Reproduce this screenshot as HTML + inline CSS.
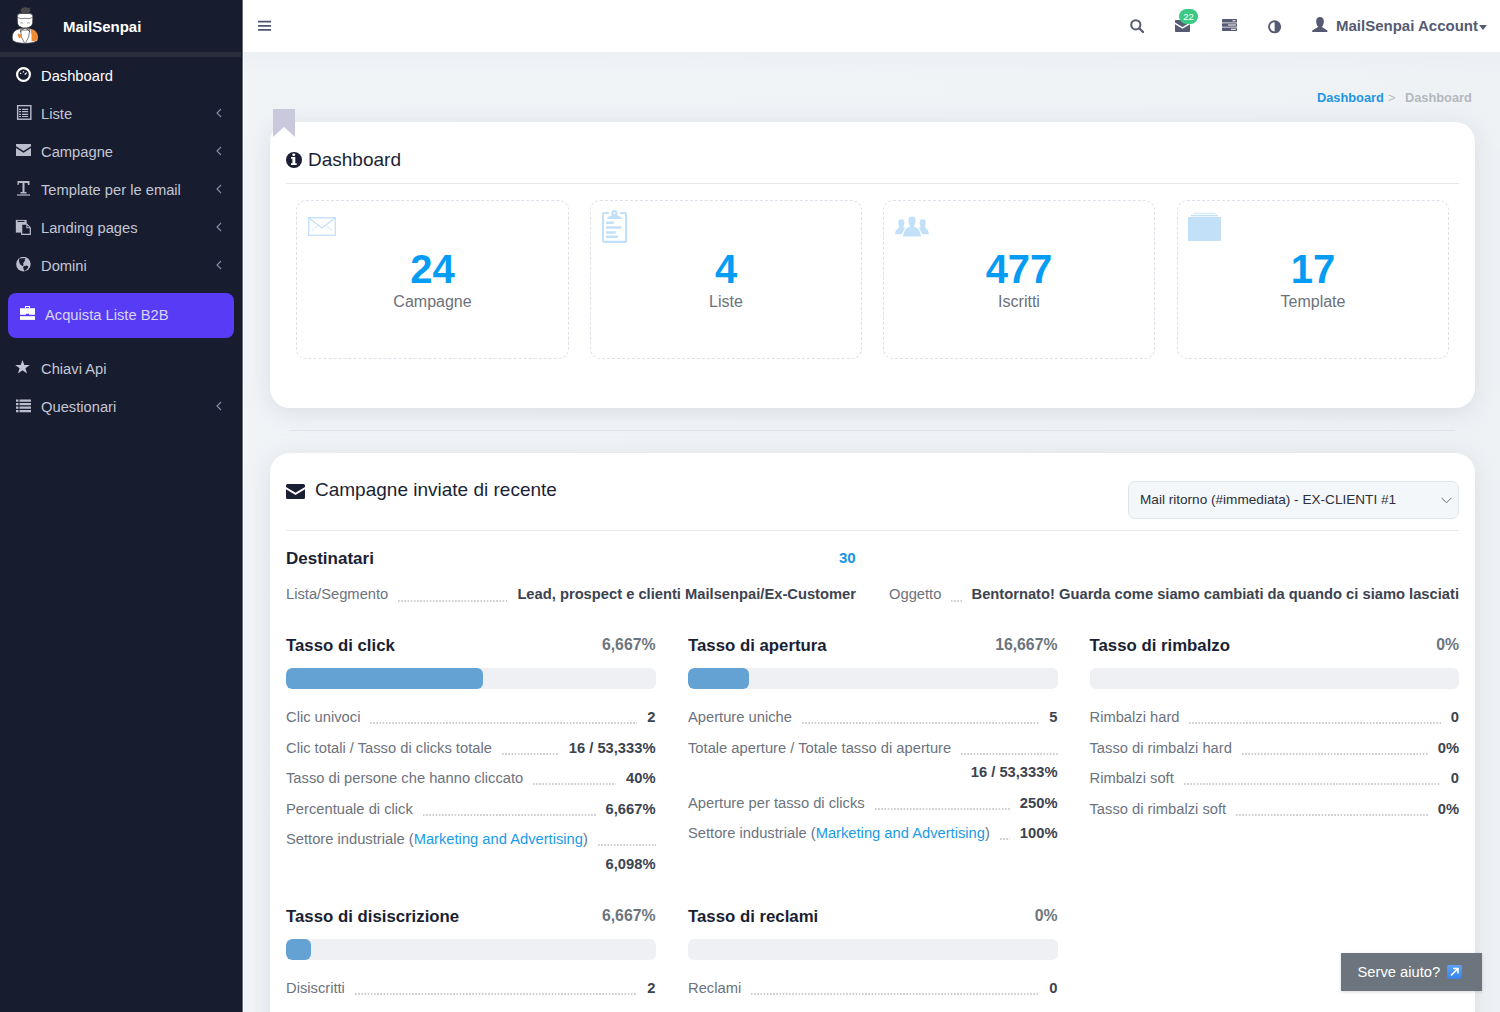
<!DOCTYPE html>
<html><head><meta charset="utf-8">
<style>
*{box-sizing:border-box;margin:0;padding:0}
html,body{width:1500px;height:1012px;overflow:hidden}
body{font-family:"Liberation Sans",sans-serif;background:#eef1f4;position:relative;color:#1b1f33}
.abs{position:absolute}
#sb{position:absolute;left:0;top:0;width:242px;height:1012px;background:#181c2f;border-right:1px solid #10152a;box-shadow:1px 0 0 #6a6f7c,2px 0 0 #fafdff}
#sb .band{position:absolute;left:0;top:52px;width:241px;height:5px;background:#2a2d3b}
#sb .brand{position:absolute;left:63px;top:18px;font-weight:bold;font-size:15px;line-height:17px;color:#fff}
.mi{position:absolute;left:0;width:241px;height:17px}
.mi .t{position:absolute;left:41px;top:1px;font-size:14.72px;line-height:17px;color:#c3c6d4;white-space:nowrap}
.mi svg{position:absolute}
.mi .chev{left:216px;top:3px}
#btn{position:absolute;left:8px;top:293px;width:226px;height:44.5px;background:#583bf5;border-radius:8px}
#btn .t{position:absolute;left:37px;top:14px;font-size:14.72px;line-height:17px;color:#d9d6f5;white-space:nowrap}
#hdr{position:absolute;left:243px;top:0;width:1257px;height:52px;background:#fff;box-shadow:0 1px 0 #f7f8fa}
#hdr svg{position:absolute}
#acct{position:absolute;left:1336px;top:17px;font-weight:bold;font-size:15px;line-height:17px;color:#555b72;white-space:nowrap}
#main{position:absolute;left:244px;top:52px;width:1256px;height:960px;background:linear-gradient(90deg,#f1f4f7 0%,#f0f3f6 70%,#eff2f5 100%)}
.bc{position:absolute;top:90px;font-size:12.8px;line-height:15px;font-weight:bold;white-space:nowrap}
.card{position:absolute;background:#fff;border-radius:20px;box-shadow:0 4px 24px rgba(150,160,175,.25)}
.ttl{position:absolute;font-size:19px;line-height:22px;color:#1b1f33;white-space:nowrap}
.hr{position:absolute;height:1px;background:#e6e8ec}
.stat{position:absolute;top:200px;height:159px;border:1px dashed #dddfe9;border-radius:10px}
.stat .n{position:absolute;left:0;right:0;top:45px;text-align:center;font-weight:bold;font-size:40px;line-height:46px;color:#069cf3}
.stat .l{position:absolute;left:0;right:0;top:92px;text-align:center;font-size:16px;line-height:18px;color:#6b717b}
.stat svg{position:absolute}
.kv{position:absolute;display:flex;font-size:14.72px;line-height:17px;white-space:nowrap}
.kv .lb{color:#6c737e}
.kv .dt{flex:1 1 0;min-width:0;margin:0 10px;height:16px;background:linear-gradient(90deg,#ccced3 0 1.7px,transparent 1.7px) 0 100%/3.18px 2px repeat-x}
.kv .vl{font-weight:bold;color:#3c4350}
.col{position:absolute;top:636px;width:369.5px}
.col .h{position:relative;height:19px;display:flex;justify-content:space-between;align-items:baseline}
.col .h .a{font-weight:bold;font-size:16.8px;line-height:19px;color:#1b1f33}
.col .h .p{font-weight:bold;font-size:15.8px;line-height:19px;color:#6c757d;position:relative;top:-1px}
.bar{position:absolute;left:0;top:32px;width:100%;height:21px;border-radius:6px;background:#eff0f4;overflow:hidden}
.bar i{position:absolute;left:0;top:0;height:21px;border-radius:6px;background:#64a2d3}
.rows{position:absolute;left:0;top:66px;width:100%}
.r{display:flex;flex-wrap:wrap;font-size:14.72px;line-height:24.6px;padding:3px 0;white-space:nowrap}
.r .lb{color:#6c737e}
.r .lb a{color:#1a9ae8;text-decoration:none}
.r .dt{flex:1 1 0;min-width:0;margin:0 0 0 10px;height:19px;background:linear-gradient(90deg,#ccced3 0 1.7px,transparent 1.7px) 0 100%/3.18px 2px repeat-x}
.r .vl{margin-left:auto;padding-left:10px;font-weight:bold;color:#3c4350}
#help{position:absolute;left:1341px;top:953px;width:141px;height:38px;background:#6c757d;box-shadow:0 1px 3px rgba(0,0,0,.15)}
#help .t{position:absolute;left:16.5px;top:10.5px;font-size:14.72px;line-height:17px;color:#fff;white-space:nowrap}
</style></head><body>
<div id="sb">
  <svg class="abs" style="left:5px;top:2px" width="40" height="48" viewBox="0 0 40 48">
    <path d="M7.5 38 Q6 31 11 28 Q15 26 20 26 Q25 26 29 28 Q34 31 32.7 38 Q31 41 20 41.5 Q9 41 7.5 38Z" fill="#fff" stroke="#2b2b2b" stroke-width=".7"/>
    <path d="M25.5 27 Q31 28 32.5 33 Q33 38 29.5 39.5 L26.5 39 Q27 33 25.5 27Z" fill="#f08a32"/>
    <path d="M12.6 32 Q14.5 31 15.9 33 L15.5 36.5 Q13 36 12.6 32Z" fill="#f08a32"/>
    <path d="M15.5 27.5 Q20 29 24.8 27.5 Q25 35 20 42 Q15 35 15.5 27.5Z" fill="#fff" stroke="#2b2b2b" stroke-width=".6"/>
    <path d="M12.3 15 Q12 12 15 11.6 Q20 11 25 11.6 Q28 12 27.8 15 L27.6 21 Q27 25.5 20 26.2 Q13 25.5 12.5 21Z" fill="#fff" stroke="#2b2b2b" stroke-width=".6"/>
    <path d="M12.6 15.5 Q16 17.5 20 16.3 Q24 17.5 27.6 15.5" fill="none" stroke="#2b2b2b" stroke-width=".6"/>
    <path d="M15.5 21.2 q1.3 -1 2.6 0 M22.2 21.2 q1.3 -1 2.6 0" fill="none" stroke="#555" stroke-width=".6"/>
    <path d="M20 25.6 L15 30.2 M20 25.6 L25.3 30" stroke="#2b2b2b" stroke-width=".7"/>
    <ellipse cx="20.5" cy="8.6" rx="4.9" ry="3.3" fill="#4a4a4a"/>
    <path d="M23.5 7.5 L26 5.6" stroke="#4a4a4a" stroke-width="1"/>
  </svg>
  <div class="brand">MailSenpai</div>
  <div class="band"></div>

  <div class="mi" style="top:67px">
    <svg style="left:16px;top:0" width="15" height="15" viewBox="0 0 15 15"><circle cx="7.5" cy="7.5" r="6.4" fill="none" stroke="#fff" stroke-width="2.2"/><path d="M4.3 6.8 l0.8 -1 M7.5 4.3 v1.2 M10.7 5.6 l-2 2" stroke="#fff" stroke-width="1.3"/></svg>
    <div class="t" style="color:#fff">Dashboard</div>
  </div>
  <div class="mi" style="top:105px">
    <svg style="left:16px;top:0" width="16" height="16" viewBox="0 0 16 16"><rect x="1.65" y=".6" width="13.2" height="13.6" fill="none" stroke="#b9bccb" stroke-width="1.4"/><path d="M3.1 4.4h1.9M6 4.4h6.1M3.1 6.7h1.9M6 6.7h6.1M3.1 9.3h1.9M6 9.3h6.1M3.1 11.5h1.9M6 11.5h6.1" stroke="#b9bccb" stroke-width="1.2"/></svg>
    <div class="t">Liste</div>
    <svg class="chev" width="6" height="10" viewBox="0 0 6 10"><path d="M5 1 L1 5 L5 9" fill="none" stroke="#8a91a6" stroke-width="1.1"/></svg>
  </div>
  <div class="mi" style="top:143px">
    <svg style="left:16px;top:1px" width="15" height="12" viewBox="0 0 15 12"><path d="M0 0h15v2.2L7.5 7 0 2.2Z M0 4 L7.5 8.8 15 4 V12 H0Z" fill="#b9bccb"/></svg>
    <div class="t">Campagne</div>
    <svg class="chev" width="6" height="10" viewBox="0 0 6 10"><path d="M5 1 L1 5 L5 9" fill="none" stroke="#8a91a6" stroke-width="1.1"/></svg>
  </div>
  <div class="mi" style="top:181px">
    <svg style="left:16px;top:-1px" width="15" height="16" viewBox="0 0 15 16"><path d="M1.5 1h12v4h-1.5l-.5-2H8.5v9h2v1.5h-6V12h2V3H3l-.5 2H1.5Z" fill="#b9bccb"/><path d="M1 15h13" stroke="#b9bccb" stroke-width="1.2"/></svg>
    <div class="t">Template per le email</div>
    <svg class="chev" width="6" height="10" viewBox="0 0 6 10"><path d="M5 1 L1 5 L5 9" fill="none" stroke="#8a91a6" stroke-width="1.1"/></svg>
  </div>
  <div class="mi" style="top:219px">
    <svg style="left:15px;top:0" width="17" height="17" viewBox="0 0 17 17"><rect x=".8" y=".9" width="10.8" height="12.7" fill="#b9bccb"/><path d="M2.5 2.4h7" stroke="#181c2f" stroke-width="1.1"/><path d="M6.1 4.6H12L15.9 8.5V15.9H6.1Z" fill="#b9bccb"/><path d="M7.3 5.8H11.3V9.3H14.7V14.7H7.3Z" fill="#181c2f"/><path d="M12.4 6.3L14.3 8.2H12.4Z" fill="#181c2f"/></svg>
    <div class="t">Landing pages</div>
    <svg class="chev" width="6" height="10" viewBox="0 0 6 10"><path d="M5 1 L1 5 L5 9" fill="none" stroke="#8a91a6" stroke-width="1.1"/></svg>
  </div>
  <div class="mi" style="top:257px">
    <svg style="left:16px;top:0" width="16" height="16" viewBox="0 0 16 16"><circle cx="7.4" cy="7.1" r="7.3" fill="#b9bccb"/><path d="M3.3 1.6 L9.6 1.1 L8.6 2.5 L9.1 3.6 L8 5 L7.1 6.5 L7.6 8 L6.6 9 L5.2 8.2 L4 7 L3.2 5 L3 3Z M7.5 9.3 L10.5 8.6 L12.4 9.6 L11.6 11.6 L9.6 13.2 L8.4 14 L7.5 12 L7.2 10.5Z" fill="#181c2f"/></svg>
    <div class="t">Domini</div>
    <svg class="chev" width="6" height="10" viewBox="0 0 6 10"><path d="M5 1 L1 5 L5 9" fill="none" stroke="#8a91a6" stroke-width="1.1"/></svg>
  </div>
  <div id="btn">
    <svg class="abs" style="left:12px;top:13px" width="15" height="14" viewBox="0 0 15 14"><path d="M5 0h5v2.4H8.9V1.1H6.1v1.3H5Z" fill="#fff"/><path d="M0 2.3H15V8.7H9V7.8H6V8.7H0Z" fill="#fff"/><rect x="0" y="10.2" width="15" height="3.7" fill="#fff"/></svg>
    <div class="t">Acquista Liste B2B</div>
  </div>
  <div class="mi" style="top:360px">
    <svg style="left:15px;top:0" width="15" height="14" viewBox="0 0 15 14"><path d="M7.5 0 L9.3 5 H14.8 L10.4 8.2 L12.1 13.5 L7.5 10.2 L2.9 13.5 L4.6 8.2 L.2 5 H5.7Z" fill="#c3c6d4"/></svg>
    <div class="t">Chiavi Api</div>
  </div>
  <div class="mi" style="top:398px">
    <svg style="left:16px;top:1px" width="15" height="14" viewBox="0 0 15 14"><path d="M0 .5h2.5v2.2H0Z M3.5 .5H15v2.2H3.5Z M0 4h2.5v2.2H0Z M3.5 4H15v2.2H3.5Z M0 7.5h2.5v2.2H0Z M3.5 7.5H15v2.2H3.5Z M0 11h2.5v2.2H0Z M3.5 11H15v2.2H3.5Z" fill="#b9bccb"/></svg>
    <div class="t">Questionari</div>
    <svg class="chev" width="6" height="10" viewBox="0 0 6 10"><path d="M5 1 L1 5 L5 9" fill="none" stroke="#8a91a6" stroke-width="1.1"/></svg>
  </div>
</div>

<div id="hdr">
  <svg style="left:15px;top:20px" width="13" height="11" viewBox="0 0 13 11"><path d="M0 1.6h13M0 5.9h13M0 9.9h13" stroke="#50566c" stroke-width="1.9"/></svg>
</div>
<svg class="abs" style="left:1130px;top:19px" width="14" height="14" viewBox="0 0 14 14"><circle cx="5.8" cy="5.8" r="4.6" fill="none" stroke="#555b72" stroke-width="2"/><path d="M9.2 9.2 L13 13" stroke="#555b72" stroke-width="2.2" stroke-linecap="round"/></svg>
<svg class="abs" style="left:1175px;top:20.3px" width="15" height="12" viewBox="0 0 15 12"><path d="M.8 0h13.4Q15 0 15 .8v1.8L7.5 7.1 0 2.6V.8Q0 0 .8 0Z M0 4.3 L7.5 8.8 15 4.3 V11.2Q15 12 14.2 12H.8Q0 12 0 11.2Z" fill="#555b72"/></svg>
<div class="abs" style="left:1179px;top:9px;width:19px;height:15px;border-radius:8px;background:#3cc885;color:#fff;font-size:9.5px;line-height:15.5px;text-align:center">22</div>
<svg class="abs" style="left:1222px;top:19px" width="15" height="12" viewBox="0 0 15 12"><rect x="0" y="0" width="15" height="3.4" rx=".4" fill="#555b72"/><rect x="0" y="4.3" width="15" height="3.4" rx=".4" fill="#555b72"/><rect x="0" y="8.6" width="15" height="3.4" rx=".4" fill="#555b72"/><path d="M10.5 1.7h3M6 6h8M9 10.3h5" stroke="#fff" stroke-width="1.1"/></svg>
<svg class="abs" style="left:1268px;top:19.5px" width="14" height="14" viewBox="0 0 14 14"><circle cx="6.6" cy="6.8" r="5.6" fill="none" stroke="#555b72" stroke-width="1.9"/><path d="M6.6 1.2 A5.6 5.6 0 0 1 6.6 12.4Z" fill="#555b72"/></svg>
<svg class="abs" style="left:1312px;top:17px" width="16" height="15" viewBox="0 0 16 15"><path d="M8 0 C10.6 0 11.9 1.6 11.8 4.6 C11.7 7.4 10.9 8.8 10.1 9.5 L10.3 10.2 L15.4 13.6 V15 H.2 V13.6 L5.7 10.2 L5.9 9.5 C5.1 8.8 4.3 7.4 4.2 4.6 C4.1 1.6 5.4 0 8 0Z" fill="#555b72"/></svg>
<div id="acct">MailSenpai Account</div>
<svg class="abs" style="left:1479px;top:25px" width="8" height="5" viewBox="0 0 8 5"><path d="M0 0h8L4 5Z" fill="#555b72"/></svg>

<div id="main"></div>
<div class="abs" style="left:244px;top:52px;width:1256px;height:22px;background:linear-gradient(180deg,rgba(226,230,236,.3),rgba(226,230,236,0))"></div>
<div class="bc" style="left:1317px;color:#1e96e6">Dashboard</div>
<div class="bc" style="left:1388px;color:#b8bcc3;font-weight:normal">&gt;</div>
<div class="bc" style="left:1405px;color:#b3b8bf">Dashboard</div>

<!-- Card 1 -->
<div class="card" style="left:270px;top:122px;width:1205px;height:286px"></div>
<svg class="abs" style="left:273px;top:109px" width="22" height="28" viewBox="0 0 22 28"><path d="M0 0h22v28L11 18 0 28Z" fill="#c9c8dc"/></svg>
<svg class="abs" style="left:286px;top:152px" width="16" height="16" viewBox="0 0 16 16"><circle cx="8" cy="8" r="8" fill="#1b1f33"/><rect x="6.3" y="1.4" width="2.9" height="2.7" rx="1" fill="#fff"/><path d="M5 5H9.3V11.2H10.7V13.1H5V11.2H6.4V6.8H5Z" fill="#fff"/></svg>
<div class="ttl" style="left:308px;top:149px">Dashboard</div>
<div class="hr" style="left:286px;top:183px;width:1173px"></div>

<div class="stat" style="left:296px;width:273px">
  <svg style="left:11px;top:16px" width="28" height="19" viewBox="0 0 28 19"><rect x=".7" y=".7" width="26.6" height="17.6" fill="none" stroke="#c3e0f9" stroke-width="1.3"/><path d="M1 1 L14 11 L27 1" fill="none" stroke="#c3e0f9" stroke-width="1.3"/><path d="M4 13.5 L10.3 8.2 M24 13.5 L17.7 8.2" stroke="#c3e0f9" stroke-width=".8"/></svg>
  <div class="n">24</div><div class="l">Campagne</div>
</div>
<div class="stat" style="left:590px;width:272px">
  <svg style="left:10px;top:8px" width="27" height="35" viewBox="0 0 27 35"><path d="M8 4H3.2Q2 4 2 5.2V31.7Q2 32.9 3.2 32.9H23.8Q25 32.9 25 31.7V5.2Q25 4 23.8 4H19" fill="none" stroke="#c3e0f9" stroke-width="2.1"/><path d="M6 10 Q6.5 7.2 10.5 6.7 V4 A3 3 0 0 1 16.5 4 V6.7 Q20.5 7.2 21 10Z" fill="#c3e0f9"/><circle cx="13.4" cy="4.1" r=".9" fill="#fff"/><path d="M5 13.7h8M5 18.4h15.4M5 23.4h9.7M5 27.8h12" stroke="#c3e0f9" stroke-width="2.5"/></svg>
  <div class="n">4</div><div class="l">Liste</div>
</div>
<div class="stat" style="left:883px;width:272px">
  <svg style="left:10.5px;top:14.5px" width="34" height="21.5" viewBox="0 0 35 23" preserveAspectRatio="none"><path d="M6.5 3.5 C9.5 3.5 9.8 6 9.6 8 C9.4 10 8.8 11 8.5 12 C10 12.5 12 13 13 14 C9.5 15 8 17 6.8 19.5 H0 C.5 15 2.5 13.3 4.5 12 C4.2 11 3.6 10 3.4 8 C3.2 6 3.5 3.5 6.5 3.5Z M28.5 3.5 C31.5 3.5 31.8 6 31.6 8 C31.4 10 30.8 11 30.5 12 C32.5 13.3 34.5 15 35 19.5 H28.2 C27 17 25.5 15 22 14 C23 13 25 12.5 26.5 12 C26.2 11 25.6 10 25.4 8 C25.2 6 25.5 3.5 28.5 3.5Z" fill="#c3e0f9"/><path d="M17.5 0 C21.5 0 22 3 21.7 6 C21.4 8.5 20.5 10 20 11 C23 12 26 13 27.5 22.5 H7.5 C9 13 12 12 15 11 C14.5 10 13.6 8.5 13.3 6 C13 3 13.5 0 17.5 0Z" fill="#c3e0f9" stroke="#fff" stroke-width="1.1"/></svg>
  <div class="n">477</div><div class="l">Iscritti</div>
</div>
<div class="stat" style="left:1177px;width:272px">
  <svg style="left:10px;top:11px" width="34" height="30" viewBox="0 0 34 30"><path d="M5.5 1.3h22" stroke="#dcedfc" stroke-width="1.5"/><path d="M3 3.6h27" stroke="#c3e0f9" stroke-width="1.5"/><rect x="0" y="5" width="33" height="24" fill="#c3e0f9"/></svg>
  <div class="n">17</div><div class="l">Template</div>
</div>

<div class="hr" style="left:290px;top:430px;width:1165px;background:#e3e4e8"></div>

<!-- Card 2 -->
<div class="card" style="left:270px;top:453px;width:1205px;height:600px"></div>
<svg class="abs" style="left:286px;top:484px" width="19" height="15" viewBox="0 0 19 15"><path d="M1.5 0h16Q19 0 19 1.5V3L9.5 8.8 0 3V1.5Q0 0 1.5 0Z M0 5.3 L9.5 11 19 5.3V13.5Q19 15 17.5 15H1.5Q0 15 0 13.5Z" fill="#1b1f33"/></svg>
<div class="ttl" style="left:315px;top:479px">Campagne inviate di recente</div>
<div class="abs" style="left:1128px;top:481px;width:331px;height:38px;background:#f4f7fa;border:1px solid #e2e4ec;border-radius:7px"></div>
<div class="abs" style="left:1140px;top:492px;font-size:13.6px;line-height:16px;color:#2a2f3a;white-space:nowrap">Mail ritorno (#immediata) - EX-CLIENTI #1</div>
<svg class="abs" style="left:1441px;top:497px" width="11" height="7" viewBox="0 0 11 7"><path d="M.5 .8 L5.5 5.8 L10.5 .8" fill="none" stroke="#6a6a6a" stroke-width="1"/></svg>
<div class="hr" style="left:286px;top:530px;width:1173px"></div>

<div class="abs" style="left:286px;top:549px;font-weight:bold;font-size:17px;line-height:19px;color:#1b1f33">Destinatari</div>
<div class="abs" style="left:839px;top:549px;font-weight:bold;font-size:15px;line-height:17px;color:#1596e6">30</div>
<div class="kv" style="left:286px;top:586px;width:570px"><span class="lb">Lista/Segmento</span><span class="dt"></span><span class="vl">Lead, prospect e clienti Mailsenpai/Ex-Customer</span></div>
<div class="kv" style="left:889px;top:586px;width:570px"><span class="lb">Oggetto</span><span class="dt"></span><span class="vl">Bentornato! Guarda come siamo cambiati da quando ci siamo lasciati</span></div>

<div class="col" style="left:286px">
  <div class="h"><span class="a">Tasso di click</span><span class="p">6,667%</span></div>
  <div class="bar"><i style="width:197px"></i></div>
  <div class="rows">
    <div class="r"><span class="lb">Clic univoci</span><span class="dt"></span><span class="vl">2</span></div>
    <div class="r"><span class="lb">Clic totali / Tasso di clicks totale</span><span class="dt"></span><span class="vl">16 / 53,333%</span></div>
    <div class="r"><span class="lb">Tasso di persone che hanno cliccato</span><span class="dt"></span><span class="vl">40%</span></div>
    <div class="r"><span class="lb">Percentuale di click</span><span class="dt"></span><span class="vl">6,667%</span></div>
    <div class="r"><span class="lb">Settore industriale (<a>Marketing and Advertising</a>)</span><span class="dt"></span><span class="vl">6,098%</span></div>
  </div>
</div>
<div class="col" style="left:688px">
  <div class="h"><span class="a">Tasso di apertura</span><span class="p">16,667%</span></div>
  <div class="bar"><i style="width:61px"></i></div>
  <div class="rows">
    <div class="r"><span class="lb">Aperture uniche</span><span class="dt"></span><span class="vl">5</span></div>
    <div class="r"><span class="lb">Totale aperture / Totale tasso di aperture</span><span class="dt"></span><span class="vl">16 / 53,333%</span></div>
    <div class="r"><span class="lb">Aperture per tasso di clicks</span><span class="dt"></span><span class="vl">250%</span></div>
    <div class="r"><span class="lb">Settore industriale (<a>Marketing and Advertising</a>)</span><span class="dt"></span><span class="vl">100%</span></div>
  </div>
</div>
<div class="col" style="left:1089.5px">
  <div class="h"><span class="a">Tasso di rimbalzo</span><span class="p">0%</span></div>
  <div class="bar"></div>
  <div class="rows">
    <div class="r"><span class="lb">Rimbalzi hard</span><span class="dt"></span><span class="vl">0</span></div>
    <div class="r"><span class="lb">Tasso di rimbalzi hard</span><span class="dt"></span><span class="vl">0%</span></div>
    <div class="r"><span class="lb">Rimbalzi soft</span><span class="dt"></span><span class="vl">0</span></div>
    <div class="r"><span class="lb">Tasso di rimbalzi soft</span><span class="dt"></span><span class="vl">0%</span></div>
  </div>
</div>
<div class="col" style="left:286px;top:907px">
  <div class="h"><span class="a">Tasso di disiscrizione</span><span class="p">6,667%</span></div>
  <div class="bar"><i style="width:25px"></i></div>
  <div class="rows">
    <div class="r"><span class="lb">Disiscritti</span><span class="dt"></span><span class="vl">2</span></div>
  </div>
</div>
<div class="col" style="left:688px;top:907px">
  <div class="h"><span class="a">Tasso di reclami</span><span class="p">0%</span></div>
  <div class="bar"></div>
  <div class="rows">
    <div class="r"><span class="lb">Reclami</span><span class="dt"></span><span class="vl">0</span></div>
  </div>
</div>

<div id="help"><div class="t">Serve aiuto?</div>
  <div class="abs" style="left:106px;top:12px;width:15px;height:14px;border-radius:2px;background:linear-gradient(#5aa2f5,#3a82e8)"></div>
  <svg class="abs" style="left:108px;top:14px" width="11" height="10" viewBox="0 0 11 10"><path d="M2 8.5 L8.5 2 M4 1.5h5v5" fill="none" stroke="#fff" stroke-width="1.6"/></svg>
</div>
</body></html>
